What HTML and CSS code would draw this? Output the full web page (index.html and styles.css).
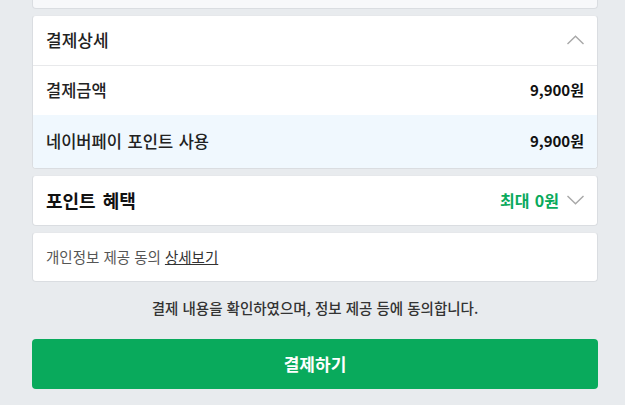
FILE: index.html
```html
<!DOCTYPE html>
<html lang="ko">
<head>
<meta charset="utf-8">
<link rel="stylesheet" href="styles.css">
</head>
<body>
<div class="page">
  <div class="card card-top"></div>

  <section class="card">
    <div class="row head">
      <span class="title">결제상세</span>
      <svg class="chev" width="17" height="10" viewBox="0 0 17 10"><path d="M0.5 9 L8.5 1.3 L16.5 9" fill="none" stroke="#a8a8a8" stroke-width="1.4"/></svg>
    </div>
    <div class="row item">
      <span class="label">결제금액</span>
      <span class="amount">9,900원</span>
    </div>
    <div class="row item hl">
      <span class="label">네이버페이 포인트 사용</span>
      <span class="amount">9,900원</span>
    </div>
  </section>

  <section class="card">
    <div class="row benefit">
      <span class="title strong">포인트 혜택</span>
      <span class="right">
        <span class="green">최대 0원</span>
        <svg class="chev" width="17" height="10" viewBox="0 0 17 10"><path d="M0.5 1 L8.5 8.7 L16.5 1" fill="none" stroke="#a8a8a8" stroke-width="1.4"/></svg>
      </span>
    </div>
  </section>

  <section class="card">
    <div class="row agree">
      <span class="small">개인정보 제공 동의 <a class="link">상세보기</a></span>
    </div>
  </section>

  <p class="notice">결제 내용을 확인하였으며, 정보 제공 등에 동의합니다.</p>

  <button class="pay">결제하기</button>
</div>
</body>
</html>
```

FILE: styles.css
```css
html, body {
  margin: 0;
  padding: 0;
  background: #e8ebee;
}
body {
  font-family: "Noto Sans CJK KR", "Noto Sans", sans-serif;
  color: #222;
}
.page {
  width: 566px;
  margin-left: 32px;
  display: flex;
  flex-direction: column;
  gap: 6px;
}
.card {
  background: #fff;
  border: 1px solid #dadde1;
  border-top-color: #e6e8eb;
  border-radius: 4px;
  overflow: hidden;
}
.card-top {
  height: 8px;
  border-top: none;
  border-radius: 0 0 4px 4px;
  background: #f7f8fa;
}
.row {
  box-sizing: border-box;
  display: flex;
  align-items: center;
  justify-content: space-between;
  padding: 0 13px 2px 13px;
}
.head {
  height: 50px;
  border-bottom: 1px solid #e8e9eb;
}
.title {
  font-size: 17px;
  font-weight: 500;
  color: #222;
}
.title.strong {
  font-size: 18px;
  font-weight: 700;
  color: #111;
  word-spacing: 2px;
}
.item {
  height: 49px;
}
.item.hl {
  height: 53px;
  background: #f0f8fe;
}
.label {
  font-size: 16.5px;
  font-weight: 500;
  color: #222;
  word-spacing: 1px;
}
.amount {
  font-size: 15px;
  font-weight: 700;
  color: #111;
}
.chev {
  display: block;
}
.benefit {
  height: 49px;
}
.right {
  display: flex;
  align-items: center;
  gap: 8px;
}
.green {
  color: #09aa5c;
  font-size: 16px;
  font-weight: 700;
  word-spacing: 1px;
}
.agree {
  height: 48px;
}
.small {
  font-size: 14.5px;
  color: #555;
}
.link {
  color: #333;
  text-decoration: underline;
}
.notice {
  margin: 10px 0 0;
  line-height: 20px;
  text-align: center;
  font-size: 14.5px;
  font-weight: 500;
  color: #333;
}
.pay {
  margin-top: 15px;
  height: 50px;
  padding-bottom: 2px;
  border: none;
  border-radius: 4px;
  background: #09aa5c;
  color: #fff;
  font-family: inherit;
  font-size: 17px;
  font-weight: 700;
}
```
